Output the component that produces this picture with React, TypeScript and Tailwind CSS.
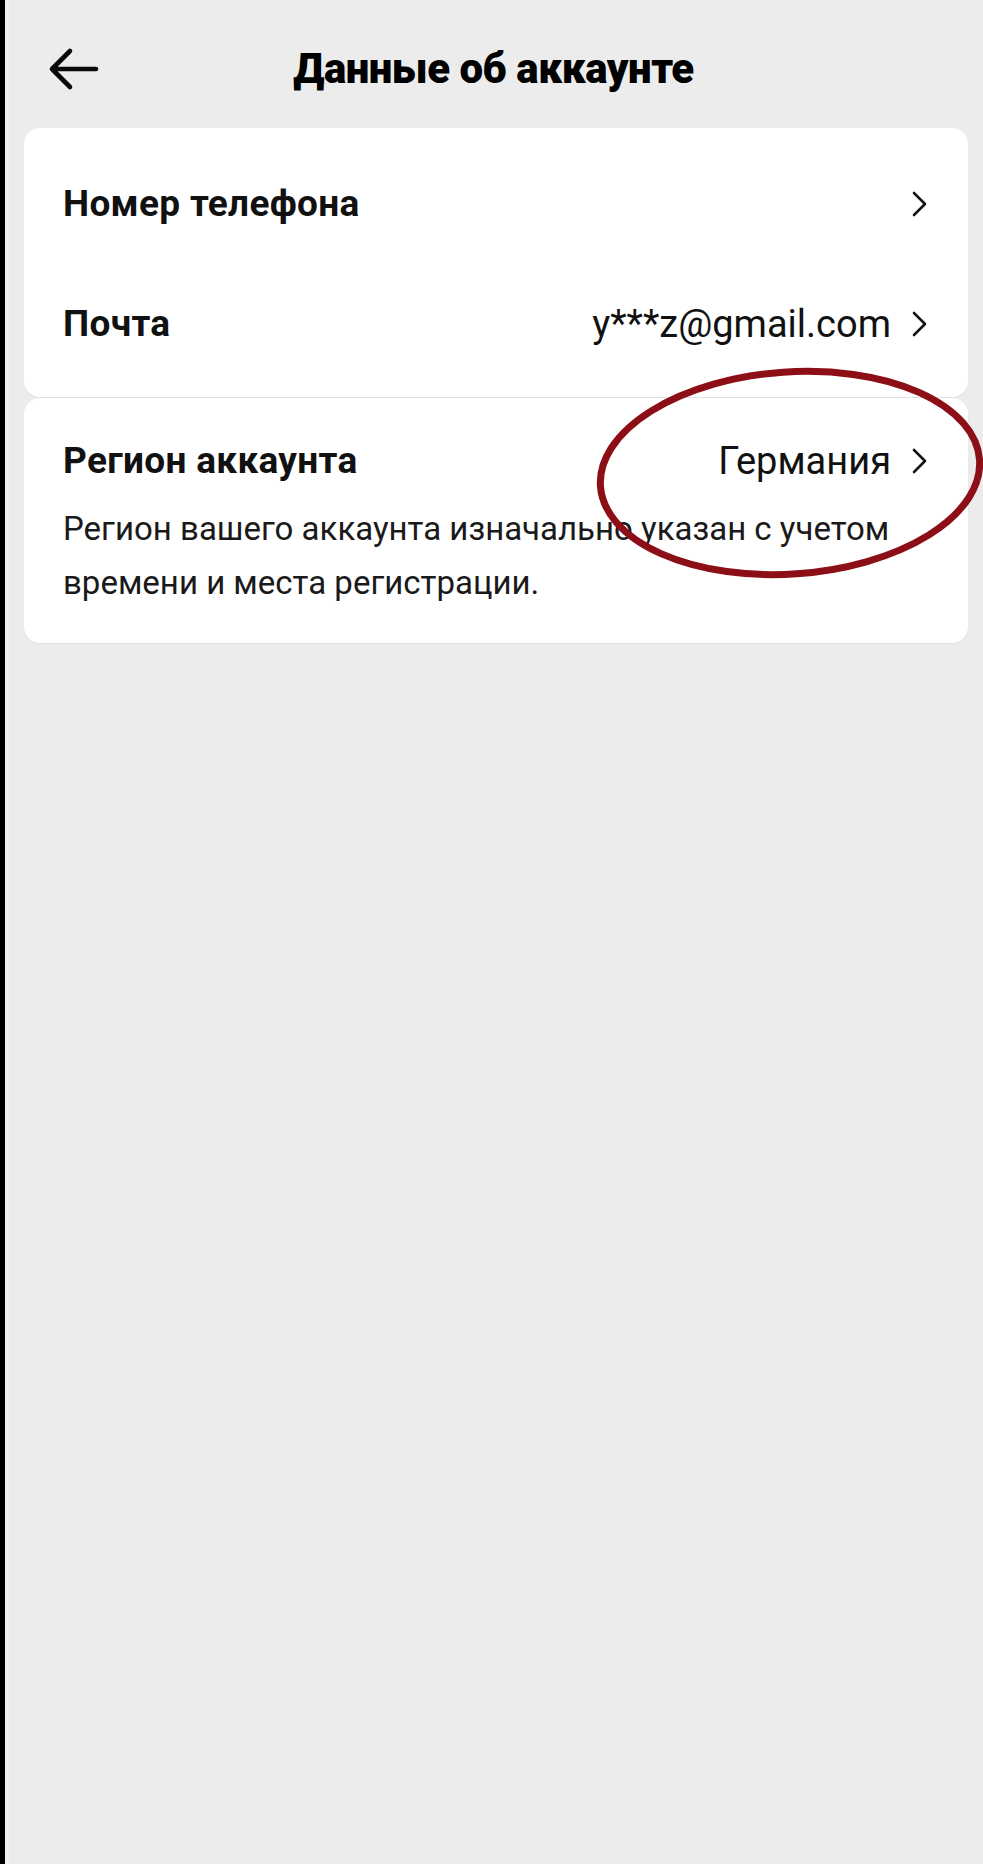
const font = { fontFamily: "Roboto, 'Noto Sans', sans-serif" };

function Chevron() {
  return (
    <svg width="20" height="28" viewBox="0 0 20 28" fill="none" className="shrink-0">
      <path d="M5 3 L16 14 L5 25" stroke="#151515" strokeWidth="2.6" strokeLinecap="round" strokeLinejoin="round" />
    </svg>
  );
}

function Row({ label, value, className }: { label: string; value?: string; className?: string }) {
  return (
    <div className={`flex items-center justify-between ${className ?? "h-[120px]"}`}>
      <span className="text-[37px] font-bold tracking-[0.3px] text-[#111]">{label}</span>
      <div className="flex items-center gap-[18px]">
        {value ? <span className="text-[38px] text-[#111]">{value}</span> : null}
        <Chevron />
      </div>
    </div>
  );
}

export default function App() {
  return (
    <div className="relative flex min-h-[1864px] w-full overflow-hidden bg-[#ececec]" style={font}>
      <div className="w-[5px] shrink-0 bg-black" />
      <div className="w-[4px] shrink-0 bg-[#f2f2f2]" />
      <div className="flex-1 pr-[15px]">
        <header className="relative flex h-[128px] items-center pt-2">
          <button className="absolute left-[39px] top-[47px] flex items-center">
            <svg width="52" height="44" viewBox="0 0 52 44" fill="none">
              <path d="M48 22 H5 M22 4 L4 22 L22 40" stroke="#0a0a0a" strokeWidth="4.6" strokeLinecap="round" strokeLinejoin="round" />
            </svg>
          </button>
          <h1 className="w-full pl-[10px] text-center text-[42px] font-black tracking-[-0.5px] text-black">
            Данные об аккаунте
          </h1>
        </header>

        <section className="ml-[15px] rounded-2xl bg-white px-[39px] pt-4 pb-[13px] shadow-[0_1px_2px_rgba(0,0,0,0.06)]">
          <Row label="Номер телефона" />
          <Row label="Почта" value="y***z@gmail.com" />
        </section>

        <section className="ml-[15px] mt-px rounded-2xl bg-white px-[39px] pt-[28px] pb-[33px] shadow-[0_1px_2px_rgba(0,0,0,0.06)]">
          <Row label="Регион аккаунта" value="Германия" className="h-[70px]" />
          <p className="mt-[6px] text-[33px] leading-[54px] text-[#1a1a1a]">
            Регион вашего аккаунта изначально указан с учетом времени и места регистрации.
          </p>
        </section>
      </div>

      <svg
        className="pointer-events-none absolute left-[590px] top-[360px]"
        width="400"
        height="226"
        viewBox="0 0 400 226"
        fill="none"
      >
        <ellipse cx="200" cy="113" rx="190" ry="101" transform="rotate(-4 200 113)" stroke="#8c0e16" strokeWidth="7" />
      </svg>
    </div>
  );
}
